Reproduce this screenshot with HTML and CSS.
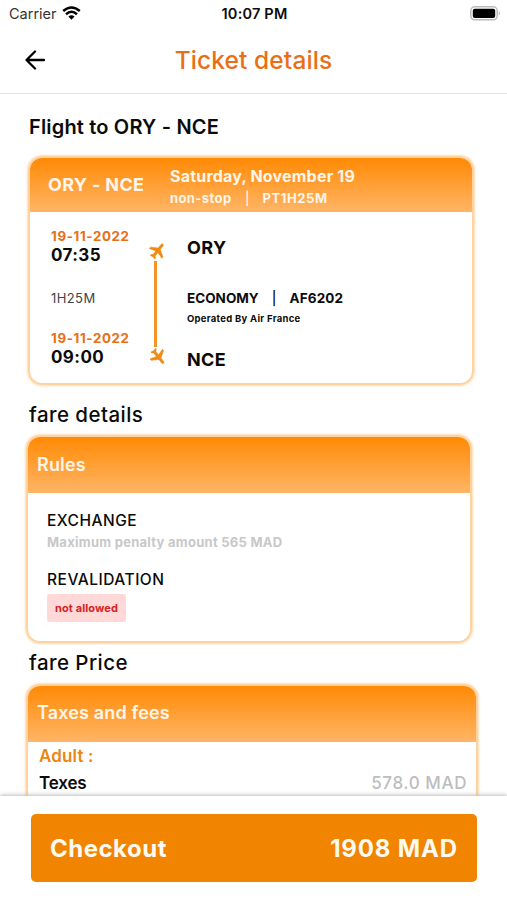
FILE: index.html
```html
<!DOCTYPE html>
<html lang="en">
<head>
<meta charset="utf-8">
<title>Ticket details</title>
<link rel="stylesheet" href="styles.css">
</head>
<body>
<div class="screen">
  <div class="status">
    <div class="carrier"><span>Carrier</span>
      <svg width="19" height="14" viewBox="0 0 19 14"><g fill="none" stroke="#000" stroke-width="2.5"><path d="M1.2 5Q9.5-2 17.8 5"/><path d="M4 8.2Q9.5 3.4 15 8.2"/></g><path d="M6.4 10.5Q9.5 8 12.6 10.5L9.5 13.8Z"/></svg>
    </div>
    <div class="time">10:07 PM</div>
    <svg class="battery" width="32" height="15" viewBox="0 0 32 15"><rect x=".8" y=".8" width="26.4" height="13" rx="4" fill="#fff" stroke="#bbb" stroke-width="1.5"/><rect x="2.8" y="2.7" width="22.4" height="9.2" rx="2"/><path d="M28.8 5q2 2.3 0 4.600z" fill="#aaa"/></svg>
  </div>
  <header class="bar">
    <svg class="back" width="20" height="20" viewBox="0 0 20 20" fill="none" stroke="#000" stroke-width="2.3" stroke-linecap="round" stroke-linejoin="round"><path d="M19 10H1.700M10 1.500 1.500 10l8.500 8.500"/></svg>
    <h1 class="title">Ticket details</h1>
  </header>
  <main class="content">
    <h2 class="heading strong">Flight to ORY - NCE</h2>
    <section class="card flight">
      <div class="card-head flight-head">
        <div class="route">ORY - NCE</div>
        <div>
          <div class="date">Saturday, November 19</div>
          <div class="meta"><span class="stop">non-stop</span><span class="sep">|</span><span class="dur">PT1H25M</span></div>
        </div>
      </div>
      <div class="flight-body">
        <div class="times">
          <div class="day">19-11-2022</div>
          <div class="hour">07:35</div>
          <div class="length">1H25M</div>
          <div class="day">19-11-2022</div>
          <div class="hour">09:00</div>
        </div>
        <div class="track">
          <svg class="plane depart" viewBox="0 0 24 24"><path d="M21 16v-2l-8-5V3.500a1.500 1.500 0 0 0-3 0V9l-8 5v2l8-2.500V19l-2 1.500V22l3.500-1 3.500 1v-1.500L13 19v-5.500z"/></svg>
          <div class="line"></div>
          <svg class="plane arrive" viewBox="0 0 24 24"><path d="M21 16v-2l-8-5V3.500a1.500 1.500 0 0 0-3 0V9l-8 5v2l8-2.500V19l-2 1.500V22l3.500-1 3.500 1v-1.500L13 19v-5.500z"/></svg>
        </div>
        <div class="places">
          <div class="port">ORY</div>
          <div class="class"><span class="economy">ECONOMY</span><span class="sep">|</span><span class="number">AF6202</span></div>
          <div class="operator">Operated By Air France</div>
          <div class="port">NCE</div>
        </div>
      </div>
    </section>
    <h2 class="heading fare">fare details</h2>
    <section class="card rules">
      <div class="card-head">Rules</div>
      <div class="rules-body">
        <div class="rule">EXCHANGE</div>
        <div class="penalty">Maximum penalty amount 565 MAD</div>
        <div class="rule">REVALIDATION</div>
        <div class="badge">not allowed</div>
      </div>
    </section>
    <h2 class="heading price">fare Price</h2>
    <section class="card taxes">
      <div class="card-head">Taxes and fees</div>
      <div class="taxes-body">
        <div class="adult">Adult :</div>
        <div class="row"><span class="label">Texes</span><span class="amount">578.0 MAD</span></div>
      </div>
    </section>
  </main>
  <footer class="footer">
    <button class="checkout"><span class="action">Checkout</span><span class="total">1908 MAD</span></button>
  </footer>
</div>
</body>
</html>
```
FILE: styles.css
```css
* { box-sizing: border-box; }
body { margin: 0; background: #fff; color: #0b0b0b; font-family: Inter, "Liberation Sans", sans-serif; }
h1, h2 { margin: 0; }
svg { display: block; flex: none; }
.screen { width: 507px; height: 900px; display: flex; flex-direction: column; overflow: hidden; white-space: nowrap; }
.status { height: 27px; display: grid; grid-template-columns: 1fr auto 1fr; align-items: center; padding: 0 7px 0 9px; }
.carrier { display: flex; align-items: center; gap: 6px; font-size: 14.5px; color: #333; }
.carrier svg { margin-top: -2px; margin-left: -1px; }
.time { font-size: 14.500px; font-weight: 600; letter-spacing: .2px; }
.battery { justify-self: end; margin-right: -2px; }
.bar { height: 67px; flex: none; display: grid; grid-template-columns: 45px 1fr 45px; align-items: center; border-bottom: 1px solid #e2e2e2; }
.back { margin-left: 25px; }
.title { text-align: center; font-size: 24.500px; font-weight: 500; color: #e96f16; line-height: 66px; letter-spacing: .1px; }
.content { flex: 1; min-height: 0; overflow: hidden; padding: 0 26px; }
.heading { padding-left: 3px; font-size: 20.500px; line-height: 24px; font-weight: 500; letter-spacing: .45px; }
.strong { padding-top: 21px; font-size: 20px; font-weight: 600; letter-spacing: .17px; }
.card { border: 2px solid #ffd2a0; border-radius: 14px; overflow: hidden; box-shadow: 0 0 3px #ffb766; }
.card-head { background: linear-gradient(#ff8a05, #ffb566); color: #fff5e8; font-size: 18px; font-weight: 600; height: 56px; line-height: 56px; padding-left: 9px; letter-spacing: .15px; }
.flight { margin: 17px 6px 0 2px; width: 446px; height: 229px; }
.flight-head { height: 54px; display: grid; grid-template-columns: 122px 1fr; padding-left: 18px; }
.route { line-height: 54px; font-weight: 700; letter-spacing: .35px; }
.date { font-size: 16px; line-height: 20px; padding-top: 8px; font-weight: 700; letter-spacing: .2px; }
.meta { display: flex; font-size: 13px; line-height: 16px; padding-top: 4px; font-weight: 700; letter-spacing: .4px; }
.meta .sep { margin: 0 12.500px 0 13.500px; font-weight: 500; }
.dur { letter-spacing: .6px; }
.flight-body { display: grid; grid-template-columns: 95px 41px 1fr; padding-left: 21px; }
.day { font-size: 13.300px; line-height: 16px; font-weight: 700; color: #e96f16; letter-spacing: .65px; }
.times { padding-top: 16px; }
.hour { font-size: 17px; line-height: 20px; font-weight: 700; letter-spacing: .4px; padding-top: 1px; }
.length { font-size: 13px; line-height: 16px; color: #444; margin: 25px 0 24px; letter-spacing: .4px; }
.track { display: flex; flex-direction: column; align-items: center; width: 22px; padding-top: 29px; }
.plane { width: 20px; height: 20px; fill: #f18a12; stroke: #f18a12; stroke-width: .7; margin-left: 1px; }
.depart { transform: rotate(38deg); }
.arrive { transform: rotate(142deg); }
.line { width: 3px; height: 86px; margin-right: 4px; background: #f7932b; }
.port { font-size: 18px; line-height: 22px; font-weight: 700; letter-spacing: .4px; }
.places { padding-top: 25px; }
.class { display: flex; font-size: 13.500px; line-height: 16px; font-weight: 700; padding-top: 31px; height: 47px; letter-spacing: 0; }
.class .sep { margin: 0 13px; font-weight: 500; }
.number { letter-spacing: .15px; }
.operator { font-size: 9.500px; line-height: 12px; font-weight: 700; margin: 7px 0 24px; letter-spacing: .28px; }
.fare { padding-top: 18px; }
.rules { width: 446px; height: 208px; margin-top: 8px; }
.rules-body { padding: 19px 0 0 19px; }
.rule { font-size: 15.500px; line-height: 18px; font-weight: 500; letter-spacing: .5px; }
.penalty { font-size: 13px; line-height: 16px; font-weight: 700; color: #c8c8c8; margin: 4px 0 21px; letter-spacing: .26px; }
.badge { width: 79px; height: 28px; margin-top: 5px; border-radius: 3px; background: #ffd8d8; color: #d72222; font-size: 11px; line-height: 28px; font-weight: 700; text-align: center; letter-spacing: .1px; }
.price { padding-top: 8px; }
.taxes { width: 452px; height: 250px; margin-top: 9px; }
.taxes .card-head { line-height: 54px; }
.taxes-body { padding: 4px 9px 0 11px; }
.adult { font-size: 17px; line-height: 20px; font-weight: 600; color: #ec860f; letter-spacing: .15px; }
.row { display: flex; justify-content: space-between; margin-top: 6px; font-size: 17px; line-height: 22px; font-weight: 500; }
.label { font-weight: 600; letter-spacing: -.15px; }
.amount { color: #bdbdbd; letter-spacing: .6px; }
.footer { height: 104px; flex: none; padding: 18px 31px 0; background: #fff; box-shadow: 0 -1px 4px #bbb; position: relative; }
.checkout { display: flex; justify-content: space-between; align-items: center; width: 446px; height: 68px; padding: 0 19px; border: 0; border-radius: 5px; background: #f18400; color: #fffaf0; font: 700 24px Inter, sans-serif; letter-spacing: .5px; }
.total { letter-spacing: .85px; }
```
